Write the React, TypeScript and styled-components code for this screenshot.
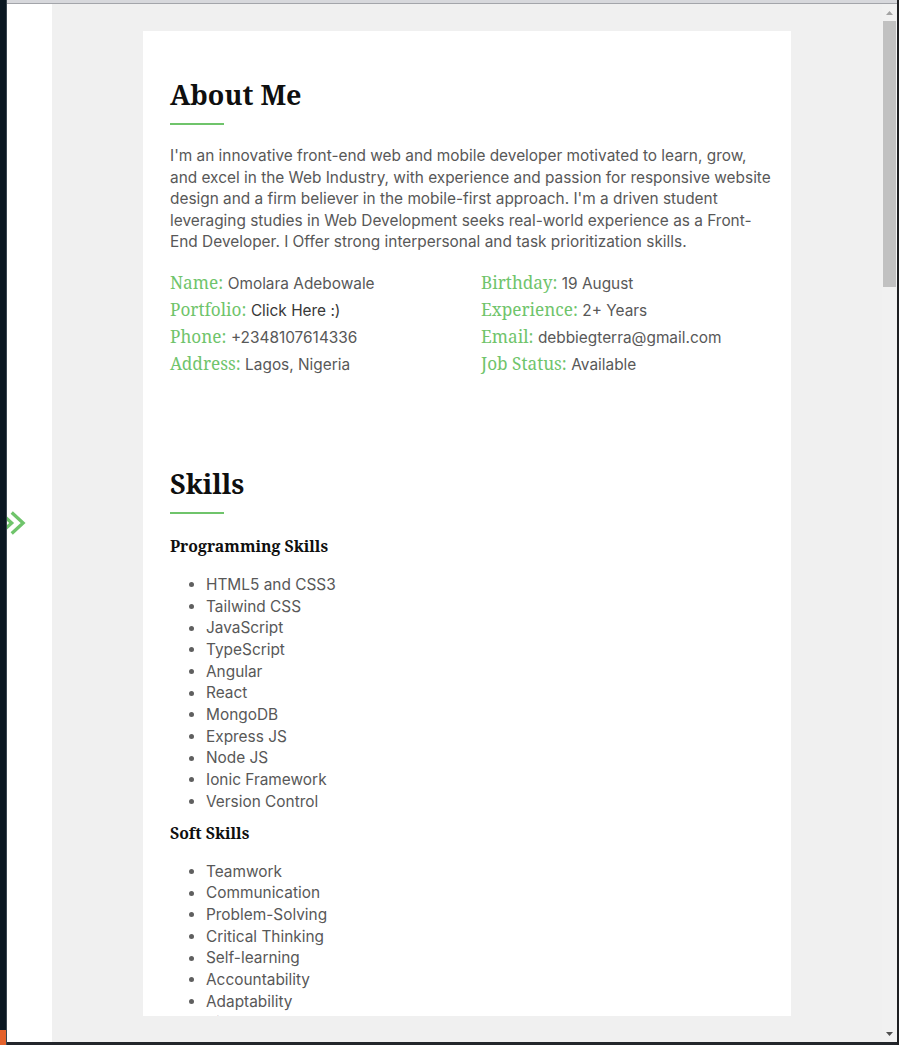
import React from "react";
import styled, { createGlobalStyle } from "styled-components";

const GlobalStyle = createGlobalStyle`
  * { box-sizing: border-box; }
  html, body { margin: 0; padding: 0; background: #f0f0f0; }
  body { font-family: "Inter", "Noto Sans", sans-serif; }
`;

const GREEN = "#6fc46b";
const TEXT = "#585858";

const Frame = styled.div`
  display: flex;
  width: 899px;
  height: 1045px;
  overflow: hidden;
`;

const LeftStrip = styled.div`
  width: 7px;
  display: flex;
  flex-direction: column;
  background: #0b1822;
  border-right: 1px solid #3a4650;
`;

const StripFill = styled.div`
  flex: 1;
`;

const StripAccent = styled.div`
  height: 15px;
  background: #e4622c;
`;

const RightEdge = styled.div`
  width: 2px;
  background: #1e1f22;
`;

const Window = styled.div`
  flex: 1;
  display: flex;
  flex-direction: column;
  min-width: 0;
`;

const TopBar = styled.div`
  height: 4px;
  background: #d7d8dc;
  border-bottom: 1px solid #a3a5aa;
`;

const BottomBar = styled.div`
  height: 3px;
  background: #23262b;
`;

const Body = styled.div`
  flex: 1;
  display: flex;
  min-height: 0;
`;

const Sidebar = styled.div`
  width: 45px;
  background: #ffffff;
  display: flex;
  align-items: center;
  overflow: hidden;
`;

const Chevrons = styled.svg`
  margin-left: -7px;
  flex: none;
`;

const Viewport = styled.main`
  flex: 1;
  background: #f0f0f0;
  display: flex;
  justify-content: center;
  align-items: flex-start;
  padding-top: 27px;
  overflow: hidden;
`;

const Card = styled.article`
  width: 648px;
  height: 985px;
  flex: none;
  background: #ffffff;
  overflow: hidden;
  padding: 48px 21px 0 27px;
`;

const Section = styled.section<{ $gap?: number }>`
  margin-top: ${(p) => p.$gap ?? 0}px;
`;

const SectionTitle = styled.h2`
  margin: 0;
  font-family: "Noto Serif", "Liberation Serif", serif;
  font-weight: 700;
  font-size: 27px;
  line-height: 32px;
  color: #0f0f0f;
`;

const TitleRule = styled.div`
  margin-top: 12px;
  width: 54px;
  height: 2px;
  background: ${GREEN};
`;

const Intro = styled.p`
  margin: 20px 0 0;
  font-size: 15.4px;
  line-height: 21.6px;
  color: ${TEXT};
  white-space: nowrap;
`;

const InfoGrid = styled.div`
  margin-top: 16px;
  display: grid;
  grid-template-columns: 311px 1fr;
  grid-auto-rows: 27px;
`;

const InfoItem = styled.div`
  display: flex;
  align-items: baseline;
  white-space: nowrap;
  line-height: 27px;
`;

const InfoLabel = styled.span`
  font-family: "Noto Serif", "Liberation Serif", serif;
  font-size: 17.2px;
  color: ${GREEN};
  margin-right: 4.5px;
`;

const InfoValue = styled.span<{ $link?: boolean }>`
  font-size: 15.4px;
  color: ${(p) => (p.$link ? "#383838" : TEXT)};
`;

const SubTitle = styled.h3<{ $gap: number }>`
  margin: ${(p) => p.$gap}px 0 0;
  font-family: "Noto Serif", "Liberation Serif", serif;
  font-weight: 700;
  font-size: 15.8px;
  line-height: 19px;
  color: #0f0f0f;
`;

const SkillList = styled.ul`
  list-style: none;
  margin: 17.8px 0 0;
  padding: 0 0 0 19px;
`;

const SkillItem = styled.li`
  display: flex;
  align-items: center;
  gap: 12px;
  font-size: 15.4px;
  line-height: 21.65px;
  color: ${TEXT};
  &::before {
    content: "";
    width: 5px;
    height: 5px;
    border-radius: 50%;
    background: #5f5f5f;
    flex: none;
  }
`;

const Scrollbar = styled.div`
  width: 15px;
  background: #f1f1f1;
  display: flex;
  flex-direction: column;
`;

const ScrollButton = styled.div`
  height: 17px;
  display: flex;
  align-items: center;
  justify-content: center;
`;

const Track = styled.div`
  flex: 1;
  padding: 0 1px;
`;

const Thumb = styled.div`
  height: 266px;
  background: #c1c1c1;
`;

const introLines = [
  "I'm an innovative front-end web and mobile developer motivated to learn, grow,",
  "and excel in the Web Industry, with experience and passion for responsive website",
  "design and a firm believer in the mobile-first approach. I'm a driven student",
  "leveraging studies in Web Development seeks real-world experience as a Front-",
  "End Developer. I Offer strong interpersonal and task prioritization skills.",
];

const info: [string, string, boolean?][] = [
  ["Name:", "Omolara Adebowale"],
  ["Birthday:", "19 August"],
  ["Portfolio:", "Click Here :)", true],
  ["Experience:", "2+ Years"],
  ["Phone:", "+2348107614336"],
  ["Email:", "debbiegterra@gmail.com"],
  ["Address:", "Lagos, Nigeria"],
  ["Job Status:", "Available"],
];

const programming = [
  "HTML5 and CSS3",
  "Tailwind CSS",
  "JavaScript",
  "TypeScript",
  "Angular",
  "React",
  "MongoDB",
  "Express JS",
  "Node JS",
  "Ionic Framework",
  "Version Control",
];

const soft = [
  "Teamwork",
  "Communication",
  "Problem-Solving",
  "Critical Thinking",
  "Self-learning",
  "Accountability",
  "Adaptability",
  "Time Management",
];

export default function App() {
  return (
    <>
      <GlobalStyle />
      <Frame>
        <LeftStrip>
          <StripFill />
          <StripAccent />
        </LeftStrip>
        <Window>
          <TopBar />
          <Body>
            <Sidebar>
              <Chevrons width="26" height="24" viewBox="0 0 26 24">
                <path
                  d="M0.3 1.5 L11.7 12 L0.3 22.5 M11.7 1.5 L23.1 12 L11.7 22.5"
                  fill="none"
                  stroke={GREEN}
                  strokeWidth="3.3"
                />
              </Chevrons>
            </Sidebar>
            <Viewport>
              <Card>
                <Section>
                  <SectionTitle>About Me</SectionTitle>
                  <TitleRule />
                  <Intro>
                    {introLines.map((line, i) => (
                      <React.Fragment key={i}>
                        {line}
                        {i < introLines.length - 1 && <br />}
                      </React.Fragment>
                    ))}
                  </Intro>
                  <InfoGrid>
                    {info.map(([label, value, link]) => (
                      <InfoItem key={label}>
                        <InfoLabel>{label}</InfoLabel>
                        <InfoValue $link={link}>{value}</InfoValue>
                      </InfoItem>
                    ))}
                  </InfoGrid>
                </Section>
                <Section $gap={91}>
                  <SectionTitle>Skills</SectionTitle>
                  <TitleRule />
                  <SubTitle $gap={23.4}>Programming Skills</SubTitle>
                  <SkillList>
                    {programming.map((s) => (
                      <SkillItem key={s}>{s}</SkillItem>
                    ))}
                  </SkillList>
                  <SubTitle $gap={11.6}>Soft Skills</SubTitle>
                  <SkillList>
                    {soft.map((s) => (
                      <SkillItem key={s}>{s}</SkillItem>
                    ))}
                  </SkillList>
                </Section>
              </Card>
            </Viewport>
            <Scrollbar>
              <ScrollButton>
                <svg width="7" height="4" viewBox="0 0 7 4">
                  <polygon points="0,4 3.5,0 7,4" fill="#a3a3a3" />
                </svg>
              </ScrollButton>
              <Track>
                <Thumb />
              </Track>
              <ScrollButton>
                <svg width="7" height="4" viewBox="0 0 7 4">
                  <polygon points="0,0 7,0 3.5,4" fill="#505050" />
                </svg>
              </ScrollButton>
            </Scrollbar>
          </Body>
          <BottomBar />
        </Window>
        <RightEdge />
      </Frame>
    </>
  );
}
